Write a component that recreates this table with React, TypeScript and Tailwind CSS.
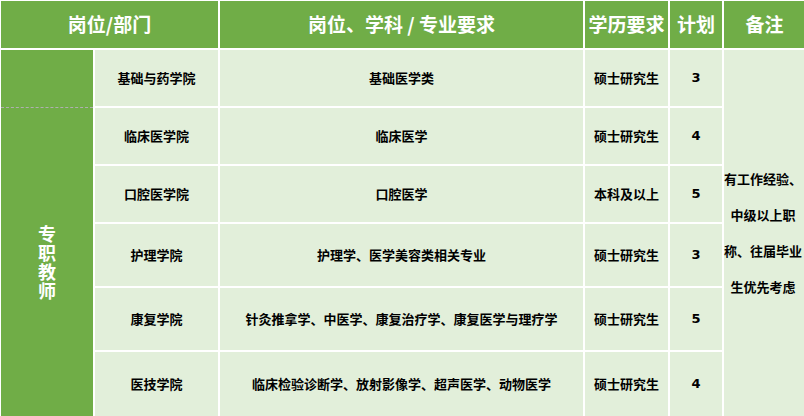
import React from 'react';

const rows = [
  { dept: '基础与药学院', major: '基础医学类', edu: '硕士研究生', plan: 3, h: 'h-[58px]' },
  { dept: '临床医学院', major: '临床医学', edu: '硕士研究生', plan: 4, h: 'h-[58px]' },
  { dept: '口腔医学院', major: '口腔医学', edu: '本科及以上', plan: 5, h: 'h-[58px]' },
  { dept: '护理学院', major: '护理学、医学美容类相关专业', edu: '硕士研究生', plan: 3, h: 'h-[64px]' },
  { dept: '康复学院', major: '针灸推拿学、中医学、康复治疗学、康复医学与理疗学', edu: '硕士研究生', plan: 5, h: 'h-[64px]' },
  { dept: '医技学院', major: '临床检验诊断学、放射影像学、超声医学、动物医学', edu: '硕士研究生', plan: 4, h: 'h-[66px]' },
];

const font = { fontFamily: '"Noto Sans CJK SC", "Noto Sans", sans-serif' };

export default function App() {
  return (
    <div className="w-[804px] h-[416px] overflow-hidden bg-[#e2efda]" style={font}>
      <table className="w-[806px] -ml-px -mt-px border-collapse table-fixed">
        <colgroup>
          <col className="w-[94px]" />
          <col className="w-[125px]" />
          <col className="w-[365px]" />
          <col className="w-[85px]" />
          <col className="w-[54px]" />
          <col className="w-[83px]" />
        </colgroup>
        <thead>
          <tr className="h-[49px] bg-[#70ad47] text-white text-[19px] font-bold">
            <th colSpan={2} className="border-2 border-white">岗位/部门</th>
            <th className="border-2 border-white">岗位、学科 / 专业要求</th>
            <th className="border-2 border-white">学历要求</th>
            <th className="border-2 border-white">计划</th>
            <th className="border-2 border-white">备注</th>
          </tr>
        </thead>
        <tbody className="text-[13px] font-bold text-black text-center">
          {rows.map((r, i) => (
            <tr key={r.dept} className={r.h}>
              {i === 0 && (
                <td className="bg-[#70ad47] border-2 border-white border-b-[#b0b0b0] [border-bottom-style:dashed] [border-bottom-width:1px]"></td>
              )}
              {i === 1 && (
                <td rowSpan={5} className="bg-[#70ad47] border-2 border-white border-t-0 align-middle">
                  <div className="flex flex-col items-center text-white text-[18px] leading-[19px] font-bold">
                    {'专职教师'.split('').map((c) => (
                      <span key={c}>{c}</span>
                    ))}
                  </div>
                </td>
              )}
              <td className="border-2 border-white">{r.dept}</td>
              <td className="border-2 border-white">{r.major}</td>
              <td className="border-2 border-white">{r.edu}</td>
              <td className="border-2 border-white" style={{ fontFamily: 'Verdana, "DejaVu Sans", sans-serif' }}>{r.plan}</td>
              {i === 0 && (
                <td rowSpan={6} className="border-2 border-white align-middle px-0">
                  <div className="leading-[36px] text-center -ml-[3px]">
                    有工作经验、<br />中级以上职<br />称、往届毕业<br />生优先考虑
                  </div>
                </td>
              )}
            </tr>
          ))}
        </tbody>
      </table>
    </div>
  );
}
